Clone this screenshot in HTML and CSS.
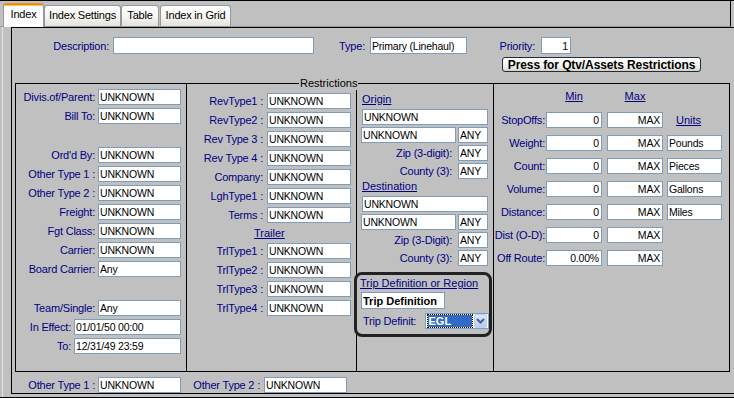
FILE: index.html
```html
<!DOCTYPE html>
<html lang="en">
<head>
  <meta charset="UTF-8">
  <meta name="viewport" content="width=device-width, initial-scale=1.0">
  <title>Index</title>
  <link rel="stylesheet" href="styles.css">
</head>
<body>
  <div class="window">
    <div class="tabbar">
      <div class="tab active t-index">Index</div>
      <div class="tab t-settings">Index Settings</div>
      <div class="tab t-table">Table</div>
      <div class="tab t-grid">Index in Grid</div>
    </div>

    <div class="page">
      <div class="frame">
        <div class="head">
          <div class="head-row">
            <label class="desc-lbl">Description:</label>
            <input class="desc-box" value="">
            <label class="type-lbl">Type:</label>
            <input class="type-box" value="Primary (Linehaul)">
            <label class="prio-lbl">Priority:</label>
            <input class="prio-box num" value="1">
          </div>
          <button class="btn-qty">Press for Qtv/Assets Restrictions</button>
        </div>

        <div class="restrict">
          <span class="legend">Restrictions</span>

          <div class="col col1">
            <div class="row"><label>Divis.of/Parent:</label><input value="UNKNOWN"></div>
            <div class="row"><label>Bill To:</label><input value="UNKNOWN"></div>
            <div class="row sep"><label class="clip">Ord'd By:</label><input value="UNKNOWN"></div>
            <div class="row"><label>Other Type 1 :</label><input value="UNKNOWN"></div>
            <div class="row"><label>Other Type 2 :</label><input value="UNKNOWN"></div>
            <div class="row"><label>Freight:</label><input value="UNKNOWN"></div>
            <div class="row"><label>Fgt Class:</label><input value="UNKNOWN"></div>
            <div class="row"><label>Carrier:</label><input value="UNKNOWN"></div>
            <div class="row"><label>Board Carrier:</label><input value="Any"></div>
            <div class="row sep"><label>Team/Single:</label><input value="Any"></div>
            <div class="row wide"><label>In Effect:</label><input value="01/01/50 00:00"></div>
            <div class="row wide"><label>To:</label><input value="12/31/49 23:59"></div>
          </div>

          <div class="col col2">
            <div class="row"><label>RevType1 :</label><input value="UNKNOWN"></div>
            <div class="row"><label>RevType2 :</label><input value="UNKNOWN"></div>
            <div class="row"><label>Rev Type 3 :</label><input value="UNKNOWN"></div>
            <div class="row"><label>Rev Type 4 :</label><input value="UNKNOWN"></div>
            <div class="row"><label>Company:</label><input value="UNKNOWN"></div>
            <div class="row"><label>LghType1 :</label><input value="UNKNOWN"></div>
            <div class="row"><label>Terms :</label><input value="UNKNOWN"></div>
            <div class="link trailer">Trailer</div>
            <div class="row"><label>TrlType1 :</label><input value="UNKNOWN"></div>
            <div class="row"><label>TrlType2 :</label><input value="UNKNOWN"></div>
            <div class="row"><label>TrlType3 :</label><input value="UNKNOWN"></div>
            <div class="row"><label>TrlType4 :</label><input value="UNKNOWN"></div>
          </div>

          <div class="col col3">
            <div class="link">Origin</div>
            <div class="row"><input class="full" value="UNKNOWN"></div>
            <div class="row"><input class="city" value="UNKNOWN"><input class="any" value="ANY"></div>
            <div class="row"><label>Zip (3-digit):</label><input class="any" value="ANY"></div>
            <div class="row"><label>County (3):</label><input class="any" value="ANY"></div>
            <div class="link">Destination</div>
            <div class="row"><input class="full" value="UNKNOWN"></div>
            <div class="row"><input class="city" value="UNKNOWN"><input class="any" value="ANY"></div>
            <div class="row"><label>Zip (3-Digit):</label><input class="any" value="ANY"></div>
            <div class="row"><label>County (3):</label><input class="any" value="ANY"></div>

            <div class="trip">
              <div class="link">Trip Definition or Region</div>
              <input class="trip-name" value="Trip Definition">
              <div class="trip-row">
                <label>Trip Definit:</label>
                <div class="combo">
                  <span class="combo-sel">EGL</span>
                  <span class="combo-btn">
                    <svg width="9" height="6" viewBox="0 0 9 6"><path d="M1 1 L4.5 4.5 L8 1" fill="none" stroke="#4d6185" stroke-width="2"/></svg>
                  </span>
                </div>
              </div>
            </div>
          </div>

          <div class="col col4">
            <div class="mm"><span class="link">Min</span><span class="link">Max</span></div>
            <div class="row"><label>StopOffs:</label><input class="mn num" value="0"><input class="mx num" value="MAX"><span class="link units">Units</span></div>
            <div class="row"><label>Weight:</label><input class="mn num" value="0"><input class="mx num" value="MAX"><input class="un" value="Pounds"></div>
            <div class="row"><label>Count:</label><input class="mn num" value="0"><input class="mx num" value="MAX"><input class="un" value="Pieces"></div>
            <div class="row"><label>Volume:</label><input class="mn num" value="0"><input class="mx num" value="MAX"><input class="un" value="Gallons"></div>
            <div class="row"><label>Distance:</label><input class="mn num" value="0"><input class="mx num" value="MAX"><input class="un" value="Miles"></div>
            <div class="row"><label>Dist (O-D):</label><input class="mn num" value="0"><input class="mx num" value="MAX"></div>
            <div class="row"><label>Off Route:</label><input class="mn num" value="0.00%"><input class="mx num" value="MAX"></div>
          </div>
        </div>

        <div class="foot">
          <label class="ot1">Other Type 1 :</label><input value="UNKNOWN">
          <label class="ot2">Other Type 2 :</label><input value="UNKNOWN">
        </div>
      </div>
    </div>
  </div>
</body>
</html>
```

FILE: styles.css
```css
* {
  box-sizing: border-box;
}
body {
  margin: 0;
  font-family: "Liberation Sans", Arial, sans-serif;
  font-size: 11px;
}
.window {
  width: 734px;
  height: 398px;
  background: #c0c0c0;
  border-top: 1px solid #000;
  border-bottom: 1px solid #000;
  overflow: hidden;
}

/* tabs */
.tabbar {
  display: flex;
  align-items: flex-end;
  width: 731px;
  height: 26px;
  padding-left: 3px;
  border-right: 1px solid #000;
  border-bottom: 1px solid #919b9c;
}
.tab {
  height: 21px;
  border: 1px solid #919b9c;
  border-bottom: 0;
  border-radius: 3px 3px 0 0;
  background: linear-gradient(#fff, #f4f3ee 60%, #e2e1da);
  text-align: center;
  line-height: 18px;
  letter-spacing: -0.2px;
  color: #000;
}
.tab.active {
  height: 24px;
  margin-bottom: -1px;
  background: #fcfcfe;
  border-top: 2px solid #e68b2c;
  box-shadow: inset 0 1px #ffc83c;
}
.t-index { width: 41px; }
.t-settings { width: 77px; }
.t-table { width: 38px; }
.t-grid { width: 71px; margin-left: 1px; }

.page {
  height: 370px;
  margin-left: 2px;
  padding-left: 8px;
  border-left: 1px solid #e4e4e4;
}
.frame {
  height: 367px;
  border: 1px solid #000;
  border-right: 0;
}

/* generic fields */
label {
  display: flex;
  justify-content: flex-end;
  white-space: nowrap;
  color: #000080;
  letter-spacing: -0.2px;
}
input {
  height: 16px;
  margin: 0;
  padding: 0 0 0 1px;
  border: 1px solid #7f9db9;
  background: #fff;
  font-family: "Liberation Sans", Arial, sans-serif;
  font-size: 10.5px;
  letter-spacing: -0.2px;
  color: #000;
  outline: none;
}
input.num {
  text-align: right;
  padding: 0 2px 0 0;
}
.link {
  color: #000080;
  text-decoration: underline;
  line-height: 14px;
  white-space: nowrap;
}

/* header */
.head {
  height: 55px;
  padding-top: 9px;
}
.head-row {
  display: flex;
  align-items: center;
  height: 17px;
}
.head-row input {
  height: 17px;
}
.desc-lbl { width: 97px; margin-right: 4px; }
.desc-box { width: 201px; }
.type-lbl { width: 51px; margin-right: 5px; }
.type-box { width: 97px; }
.prio-lbl { width: 68px; margin-right: 6px; }
.prio-box { width: 30px; }
.btn-qty {
  display: block;
  width: 199px;
  height: 15px;
  margin: 3px 0 0 490px;
  padding: 0;
  border: 1px solid #1e2c40;
  border-radius: 3px;
  background: linear-gradient(#fff, #f6f5f1 50%, #e6e4dc 85%, #cfcabf);
  font-family: "Liberation Sans", Arial, sans-serif;
  font-size: 12px;
  font-weight: bold;
  letter-spacing: -0.1px;
  line-height: 12px;
  color: #000;
}

/* restrictions group */
.restrict {
  position: relative;
  display: grid;
  grid-template-columns: 170px 170px 137px 236px;
  width: 715px;
  height: 289px;
  margin-left: 3px;
  border: 1px solid #000;
}
.legend {
  position: absolute;
  top: -7px;
  left: 283px;
  padding: 0 1px;
  background: #c0c0c0;
  line-height: 13px;
  color: #000;
}
.col + .col {
  border-left: 1px solid #000;
}
.row {
  display: flex;
  align-items: center;
  margin-top: 3px;
}
.row:first-child {
  margin-top: 0;
}

.col1 { padding-top: 5px; }
.col1 label { width: 79px; margin-right: 3px; }
.col1 input { width: 83px; }
.col1 .row.sep { margin-top: 23px; }
.col1 label.clip { width: 44px; margin-left: 35px; overflow: hidden; }
.col1 .wide label { width: 55px; }
.col1 .wide input { width: 107px; }

.col2 { padding-top: 9px; }
.col2 label { width: 76px; margin-right: 4px; }
.col2 input { width: 84px; }
.col2 .trailer {
  margin: 3px 0 0 67px;
  line-height: 14px;
}

.col3 { padding: 8px 5px 0 0; }
.col3 > .link { margin-left: 5px; }
.col3 .row { justify-content: flex-end; margin-top: 2px; }
.col3 .link + .row { margin-top: 3px; }
.col3 label { margin-right: 6px; }
.col3 .full { width: 126px; }
.col3 .city { width: 95px; margin-right: 2px; }
.col3 .any { width: 30px; }

.trip {
  width: 138px;
  height: 65px;
  margin: 6px 0 0 -3px;
  padding: 2px 0 0 3px;
  border: 3px solid #222;
  border-radius: 8px;
}
.trip .link {
  line-height: 13px;
}
.trip-name {
  display: block;
  width: 84px;
  height: 17px;
  margin: 2px 0 0 1px;
  font-size: 11px;
  font-weight: bold;
  letter-spacing: 0;
}
.trip-row {
  display: flex;
  align-items: center;
  margin-top: 4px;
}
.trip-row label {
  width: 56px;
  margin-left: 3px;
  justify-content: flex-start;
}
.combo {
  display: flex;
  width: 65px;
  height: 16px;
  padding: 0 1px;
  border: 1px solid #7f9db9;
  background: #fff;
}
.combo-sel {
  flex: 1;
  height: 14px;
  border: 1px dotted #000;
  background: #316ac5;
  background-clip: padding-box;
  color: #fff;
  font-size: 11px;
  font-weight: bold;
  line-height: 12px;
  padding-left: 1px;
}
.combo-btn {
  display: flex;
  align-items: center;
  justify-content: center;
  width: 13px;
  height: 14px;
  margin-left: 1px;
  border: 1px solid #b9cdf7;
  border-radius: 2px;
  background: linear-gradient(#dbe6fd, #b8cbf6);
}

.col4 { padding-top: 6px; }
.mm {
  display: flex;
  margin-left: 52px;
}
.mm .link {
  width: 56px;
  text-align: center;
  line-height: 13px;
}
.mm .link + .link { margin-left: 5px; }
.col4 .row { margin-top: 7px; }
.col4 .mm + .row { margin-top: 9px; }
.col4 label { width: 51px; margin-right: 1px; }
.col4 .mn { width: 56px; }
.col4 .mx { width: 56px; margin-left: 5px; }
.col4 .un { width: 55px; margin-left: 4px; }
.col4 .units { margin-left: 4px; padding-left: 9px; }

/* footer */
.foot {
  display: flex;
  align-items: center;
  height: 21px;
  padding-top: 5px;
}
.foot input { width: 83px; }
.foot .ot1 { width: 83px; margin-right: 3px; }
.foot .ot2 { width: 79px; margin-right: 4px; }
```
